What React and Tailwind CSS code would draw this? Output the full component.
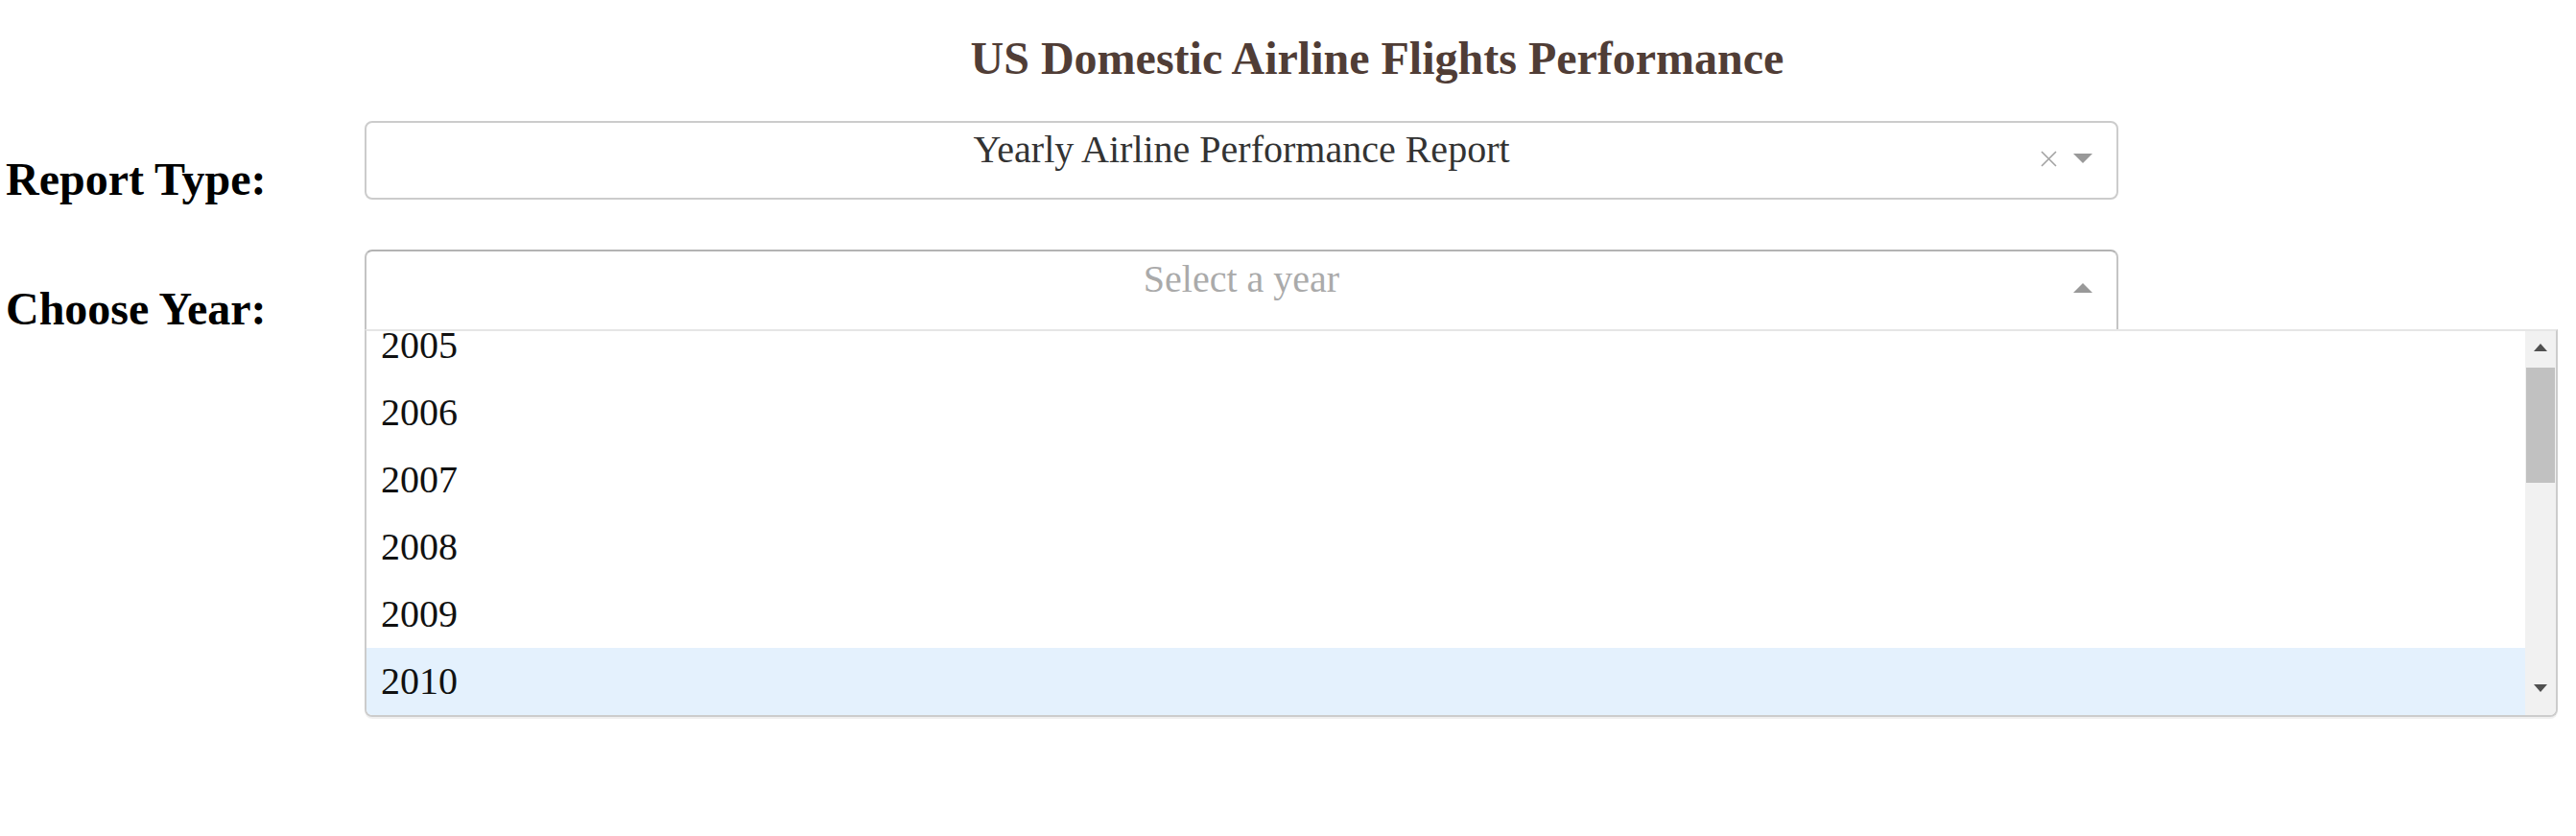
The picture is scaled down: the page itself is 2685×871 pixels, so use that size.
const years = [2005, 2006, 2007, 2008, 2009, 2010, 2011, 2012, 2013, 2014, 2015, 2016, 2017, 2018, 2019, 2020];

const Caret = ({ up }) => (
  <svg width="20" height="10" viewBox="0 0 20 10">
    {up ? <polygon points="0,10 20,10 10,0" fill="#999" /> : <polygon points="0,0 20,0 10,10" fill="#999" />}
  </svg>
);

const ReportDropdown = () => (
  <div className="flex h-[82px] w-[1828px] shrink-0 rounded-[8px] border-2 border-[#ccc] bg-white">
    <div className="flex-1 pl-[84px] pt-[8px] text-center text-[40px] leading-none text-[#333]">
      Yearly Airline Performance Report
    </div>
    <div className="flex w-[84px] items-center justify-end gap-[17px] pb-[4px] pr-[25px]">
      <svg width="17" height="17" viewBox="0 0 17 17">
        <path d="M1 1 L16 16 M16 1 L1 16" stroke="#a3a3a3" strokeWidth="1.6" />
      </svg>
      <Caret />
    </div>
  </div>
);

const YearDropdown = () => (
  <div className="relative w-[1828px] shrink-0">
    <div className="flex h-[83px] rounded-t-[8px] border-2 border-b-0 border-[#c4c4c4] border-t-[#b3b3b3] bg-white">
      <div className="flex-1 pl-[84px] pt-[9px] text-center text-[40px] leading-none text-[#aaa]">
        Select a year
      </div>
      <div className="flex w-[84px] items-center justify-end pb-[6px] pr-[25px]">
        <Caret up />
      </div>
    </div>
    {/* open menu */}
    <div className="absolute left-0 top-full flex h-[404px] w-[2286px] overflow-hidden rounded-b-[8px] border-2 border-[#ccc] border-t-[#e6e6e6] bg-white shadow-[0_2px_0_rgba(0,0,0,0.06)]">
      <div className="flex-1 overflow-hidden">
        <div className="-mt-[20px]">
          {years.map((y) => (
            <div
              key={y}
              className={
                'flex h-[70px] items-center pl-[15px] text-[40px] leading-none text-[#111] ' +
                (y === 2010 ? 'bg-[#e4f1fd]' : 'bg-white')
              }
            >
              {y}
            </div>
          ))}
        </div>
      </div>
      <div className="flex w-[32px] flex-col bg-[#f1f1f1]">
        <div className="flex h-[34px] items-center justify-center">
          <svg width="14" height="8" viewBox="0 0 14 8">
            <polygon points="0,8 14,8 7,0" fill="#505050" />
          </svg>
        </div>
        <div className="mx-[1px] mt-[4px] h-[120px] bg-[#c1c1c1]" />
        <div className="flex-1" />
        <div className="mb-[11px] flex h-[34px] items-center justify-center">
          <svg width="14" height="8" viewBox="0 0 14 8">
            <polygon points="0,0 14,0 7,8" fill="#505050" />
          </svg>
        </div>
      </div>
    </div>
  </div>
);

export default function App() {
  return (
    <div className="min-h-screen bg-white font-['Liberation_Serif',serif]">
      <h1 className="pl-[186px] pt-[37px] text-center text-[48px] font-bold leading-none text-[#503D36]">
        US Domestic Airline Flights Performance
      </h1>
      <div className="mt-[41px] flex flex-col gap-[52px]">
        <div className="flex h-[82px]">
          <h2 className="w-[380px] shrink-0 pl-[6px] pt-[37px] text-[48px] font-bold leading-none text-black">
            Report Type:
          </h2>
          <ReportDropdown />
        </div>
        <div className="flex h-[83px]">
          <h2 className="w-[380px] shrink-0 pl-[6px] pt-[38px] text-[48px] font-bold leading-none text-black">
            Choose Year:
          </h2>
          <YearDropdown />
        </div>
      </div>
    </div>
  );
}
